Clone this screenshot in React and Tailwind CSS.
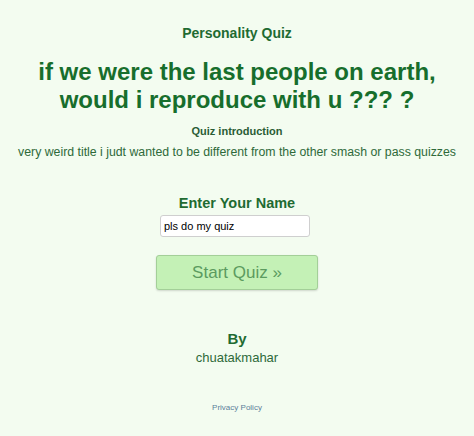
import React from 'react';

const App = () => {
  return (
    <div className="min-h-[436px] w-full bg-[#f3fcf0] text-center font-['Liberation_Sans',Arial,sans-serif]">
      <div className="flex flex-col items-center pt-[25px]">
        <h3 className="text-[14px] font-bold leading-[16px] text-[#1f6b32]">Personality Quiz</h3>

        <h1 className="mt-[17px] text-[24px] font-bold leading-[28px] text-[#176e2c]">
          if we were the last people on earth,
          <br />
          would i reproduce with u ??? ?
        </h1>

        <h4 className="mt-[10px] text-[11px] font-bold leading-[14px] text-[#2a5c35]">Quiz introduction</h4>
        <p className="mt-[6px] text-[12.3px] leading-[16px] text-[#2e6a3a]">
          very weird title i judt wanted to be different from the other smash or pass quizzes
        </p>

        <h2 className="mt-[34px] text-[14.5px] font-bold leading-[18px] text-[#1f6b32]">Enter Your Name</h2>
        <input
          type="text"
          defaultValue="pls do my quiz"
          className="mt-[3px] h-[22px] w-[150px] -translate-x-[2px] rounded-[3px] border border-[#cfcfcf] bg-white px-[3px] text-left text-[11px] text-black outline-none"
        />

        <button className="mt-[18px] h-[35px] w-[162px] rounded-[3px] border border-[#a3cf98] bg-[#c4f1b6] text-[17px] text-[#5b9b5f] shadow-[0_1px_2px_rgba(0,0,0,0.15)]">
          Start Quiz »
        </button>

        <h3 className="mt-[40px] text-[15px] font-bold leading-[18px] text-[#1f6b32]">By</h3>
        <p className="mt-[2px] text-[13px] leading-[16px] text-[#2e6a3a]">chuatakmahar</p>

        <a className="mt-[37px] text-[8px] leading-[10px] text-[#5b7f9a]">Privacy Policy</a>
      </div>
    </div>
  );
};

export default App;
